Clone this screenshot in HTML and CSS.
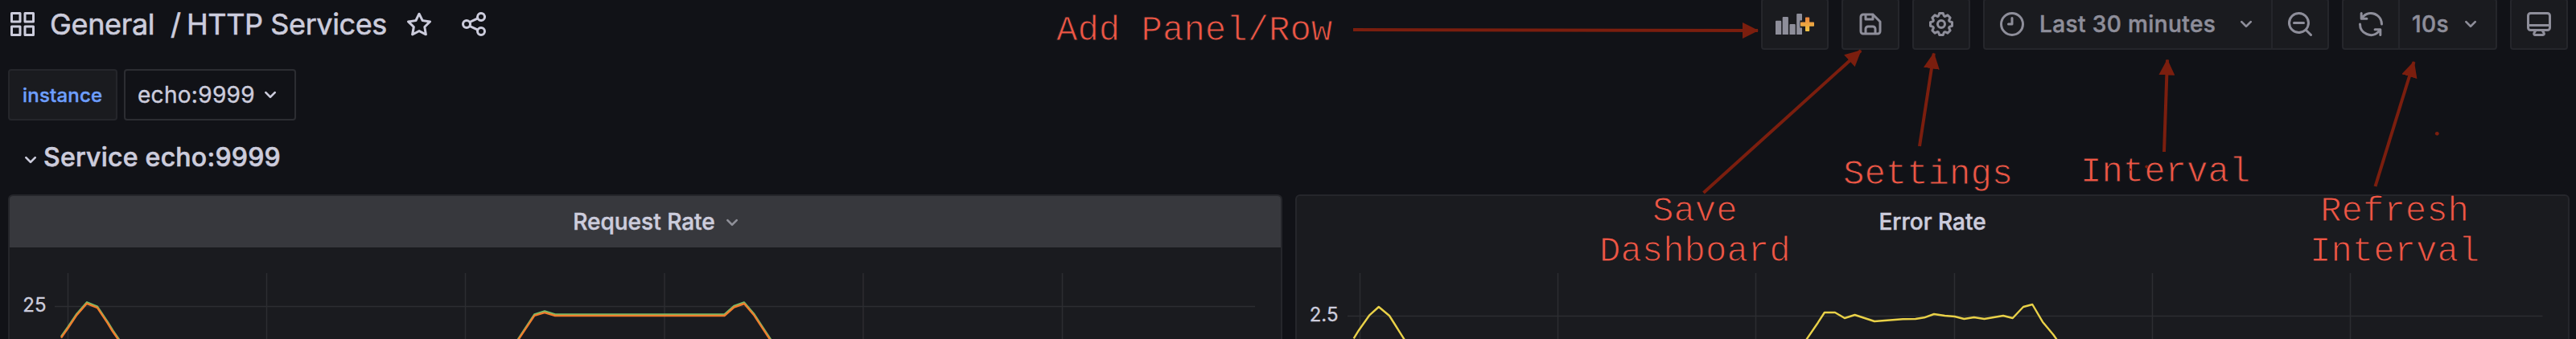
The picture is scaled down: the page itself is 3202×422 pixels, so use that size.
FILE: index.html
```html
<!DOCTYPE html>
<html lang="en">
<head>
<meta charset="utf-8">
<title>HTTP Services</title>
<link rel="stylesheet" href="styles.css">
</head>
<body>
<svg class="defs" aria-hidden="true">
  <symbol id="angle" viewBox="0 0 24 24"><path d="M17,9.17a1,1,0,0,0-1.41,0L12,12.71,8.46,9.17a1,1,0,0,0-1.41,0,1,1,0,0,0,0,1.42l4.24,4.24a1,1,0,0,0,1.42,0L17,10.59A1,1,0,0,0,17,9.17Z"/></symbol>
</svg>
<div class="page">
  <header class="toolbar">
    <svg class="icon" viewBox="0 0 24 24"><path d="M10,13H3a1,1,0,0,0-1,1v7a1,1,0,0,0,1,1h7a1,1,0,0,0,1-1V14A1,1,0,0,0,10,13ZM9,20H4V15H9ZM21,2H14a1,1,0,0,0-1,1v7a1,1,0,0,0,1,1h7a1,1,0,0,0,1-1V3A1,1,0,0,0,21,2ZM20,9H15V4h5Zm1,4H14a1,1,0,0,0-1,1v7a1,1,0,0,0,1,1h7a1,1,0,0,0,1-1V14A1,1,0,0,0,21,13Zm-1,7H15V15h5ZM10,2H3A1,1,0,0,0,2,3v7a1,1,0,0,0,1,1h7a1,1,0,0,0,1-1V3A1,1,0,0,0,10,2ZM9,9H4V4H9Z"/></svg>
    <h1 class="crumbs"><span class="folder">General</span><span class="slash">/</span><span class="name">HTTP Services</span></h1>
    <svg class="icon star" viewBox="0 0 24 24"><path d="M22,9.67A1,1,0,0,0,21.14,9l-5.69-.83L12.9,3a1,1,0,0,0-1.8,0L8.55,8.16,2.86,9a1,1,0,0,0-.81.68,1,1,0,0,0,.25,1l4.13,4-1,5.68A1,1,0,0,0,6.9,21.44L12,18.77l5.1,2.67a.93.93,0,0,0,.46.12,1,1,0,0,0,.59-.19,1,1,0,0,0,.4-1l-1-5.68,4.13-4A1,1,0,0,0,22,9.67Zm-6.15,4a1,1,0,0,0-.29.88l.72,4.2-3.76-2a1.06,1.06,0,0,0-.94,0l-3.76,2,.72-4.2a1,1,0,0,0-.29-.88l-3-3,4.21-.61a1,1,0,0,0,.76-.55L12,5.7l1.88,3.82a1,1,0,0,0,.76.55l4.21.61Z"/></svg>
    <svg class="icon" viewBox="0 0 24 24"><path d="M18,14a4,4,0,0,0-3.08,1.48l-5.1-2.35a3.64,3.64,0,0,0,0-2.26l5.1-2.35A4,4,0,1,0,14,6a4.17,4.17,0,0,0,.07.71L8.79,9.14a4,4,0,1,0,0,5.72l5.28,2.43A4.17,4.17,0,0,0,14,18a4,4,0,1,0,4-4ZM18,4a2,2,0,1,1-2,2A2,2,0,0,1,18,4ZM6,14a2,2,0,1,1,2-2A2,2,0,0,1,6,14Zm12,6a2,2,0,1,1,2-2A2,2,0,0,1,18,20Z"/></svg>
    <nav class="actions">
      <div class="btn add"><svg class="addicon" viewBox="0 0 48 26">
        <defs><linearGradient id="plus" x1="0" y1="0" x2="0" y2="1"><stop offset="0" stop-color="#e8833e"/><stop offset="1" stop-color="#f0c544"/></linearGradient></defs>
        <path d="M0 9.8q0-1 1-1h5.200q1 0 1 1V26H0ZM8.700 4.900q0-1 1-1h5.200q1 0 1 1V26H8.700ZM17.500 14q0-1 1-1h5.200q1 0 1 1v12h-7.200ZM26.200 1q0-1 1-1h4.800q1 0 1 1v7.500h-2.600v9H33V26h-6.800Z"/>
        <path fill="url(#plus)" d="M37.800 4.400h3.600q.8 0 .8.800v5.300h5q.9 0 .9.900v3.400q0 .9-.9.900h-5v5.300q0 1-.8 1h-3.600q-.8 0-.8-1v-5.300h-5.100q-.9 0-.9-.9v-3.400q0-.9.900-.9H37V5.200q0-.8.800-.8Z"/></svg></div>
      <div class="btn square"><svg class="icon" viewBox="0 0 24 24"><path d="M20.710,9.290l-6-6a1,1,0,0,0-.32-.21A1.090,1.090,0,0,0,14,3H6A3,3,0,0,0,3,6V18a3,3,0,0,0,3,3H18a3,3,0,0,0,3-3V10A1,1,0,0,0,20.710,9.290ZM9,5h4V7H9Zm6,14H9V16a1,1,0,0,1,1-1h4a1,1,0,0,1,1,1Zm4-1a1,1,0,0,1-1,1H17V16a3,3,0,0,0-3-3H10a3,3,0,0,0-3,3v3H6a1,1,0,0,1-1-1V6A1,1,0,0,1,6,5H7V8A1,1,0,0,0,8,9h6a1,1,0,0,0,1-1V6.410l4,4Z"/></svg></div>
      <div class="btn square"><svg class="icon" viewBox="0 0 24 24"><path d="M21.32,9.55l-1.89-.63.89-1.78A1,1,0,0,0,20.13,6L18,3.87a1,1,0,0,0-1.15-.19l-1.78.89-.63-1.89A1,1,0,0,0,13.5,2h-3a1,1,0,0,0-.95.68L8.92,4.57,7.14,3.68A1,1,0,0,0,6,3.87L3.87,6a1,1,0,0,0-.19,1.15l.89,1.78-1.89.63A1,1,0,0,0,2,10.5v3a1,1,0,0,0,.68.95l1.89.63-.89,1.78A1,1,0,0,0,3.87,18L6,20.13a1,1,0,0,0,1.15.19l1.78-.89.63,1.89a1,1,0,0,0,.95.68h3a1,1,0,0,0,.95-.68l.63-1.89,1.78.89A1,1,0,0,0,18,20.13L20.13,18a1,1,0,0,0,.19-1.15l-.89-1.78,1.89-.63A1,1,0,0,0,22,13.5v-3A1,1,0,0,0,21.32,9.55ZM20,12.78l-1.2.4A2,2,0,0,0,17.64,16l.57,1.14-1.1,1.1L16,17.64a2,2,0,0,0-2.79,1.16l-.4,1.2H11.22l-.4-1.2A2,2,0,0,0,8,17.64l-1.14.57-1.1-1.1L6.36,16A2,2,0,0,0,5.2,13.18L4,12.78V11.22l1.2-.4A2,2,0,0,0,6.36,8L5.79,6.89l1.1-1.1L8,6.36A2,2,0,0,0,10.82,5.2l.4-1.2h1.56l.4,1.2A2,2,0,0,0,16,6.36l1.14-.57,1.1,1.1L17.64,8a2,2,0,0,0,1.16,2.79l1.2.4ZM12,8a4,4,0,1,0,4,4A4,4,0,0,0,12,8Zm0,6a2,2,0,1,1,2-2A2,2,0,0,1,12,14Z"/></svg></div>
      <div class="group">
        <div class="btn range">
          <svg class="icon" viewBox="0 0 24 24"><path d="M12,2A10,10,0,1,0,22,12,10,10,0,0,0,12,2Zm0,18a8,8,0,1,1,8-8A8,8,0,0,1,12,20ZM12,6a1,1,0,0,0-1,1v4H9a1,1,0,0,0,0,2h3a1,1,0,0,0,1-1V7A1,1,0,0,0,12,6Z"/></svg>
          <span class="rangetext">Last 30 minutes</span>
          <svg class="angle"><use href="#angle"/></svg>
        </div>
        <div class="btn square zoomout"><svg class="icon" viewBox="0 0 24 24"><path d="M21.71,20.29,18,16.61A9,9,0,1,0,16.61,18l3.68,3.68a1,1,0,0,0,1.42,0A1,1,0,0,0,21.71,20.29ZM11,18a7,7,0,1,1,7-7A7,7,0,0,1,11,18ZM15,10H7a1,1,0,0,0,0,2h8a1,1,0,0,0,0-2Z"/></svg></div>
      </div>
      <div class="group">
        <div class="btn refresh"><svg class="icon" viewBox="0 0 24 24"><path d="M19.91,15.51H15.38a1,1,0,0,0,0,2h2.4A8,8,0,0,1,4,12a1,1,0,0,0-2,0,10,10,0,0,0,16.88,7.23V21a1,1,0,0,0,2,0V16.5A1,1,0,0,0,19.91,15.51ZM12,2A10,10,0,0,0,5.12,4.77V3a1,1,0,0,0-2,0V7.5a1,1,0,0,0,1,1h4.5a1,1,0,0,0,0-2H6.22A8,8,0,0,1,20,12a1,1,0,0,0,2,0A10,10,0,0,0,12,2Z"/></svg></div>
        <div class="btn every"><span>10s</span><svg class="angle"><use href="#angle"/></svg></div>
      </div>
      <div class="btn square"><svg class="icon" viewBox="0 0 24 24"><path d="M19,2H5A3,3,0,0,0,2,5V15a3,3,0,0,0,3,3H7.64l-.58,1a2,2,0,0,0,0,2,2,2,0,0,0,1.75,1h6.46A2,2,0,0,0,17,21a2,2,0,0,0,0-2l-.59-1H19a3,3,0,0,0,3-3V5A3,3,0,0,0,19,2ZM8.77,20,10,18H14l1.2,2ZM20,15a1,1,0,0,1-1,1H5a1,1,0,0,1-1-1V14H20Zm0-3H4V5A1,1,0,0,1,5,4H19a1,1,0,0,1,1,1Z"/></svg></div>
    </nav>
  </header>

  <div class="variables">
    <label class="varname">instance</label>
    <div class="varvalue"><span>echo:9999</span><svg class="angle"><use href="#angle"/></svg></div>
  </div>

  <div class="row"><svg class="angle"><use href="#angle"/></svg><h2 class="rowtitle">Service echo:9999</h2></div>

  <main class="panels">
    <section class="panel">
      <div class="head hover"><span>Request Rate</span><svg class="angle"><use href="#angle"/></svg></div>
      <svg class="chart" viewBox="12 308 1580 114">
        <path class="grid" d="M84.500 340V422M331.500 340V422M578.500 340V422M826 340V422M1073 340V422M1320.500 340V422M68 381.500H1560"/>
        <text class="tick" x="57.500" y="388" text-anchor="end">25</text>
        <g class="line">
          <path stroke="#73bf69" d="M76 419 84.500 407 95.400 390.700 108 376.300 121 381.700 133.700 400.700 140 411 149 424M643.500 423 664.300 391.300 677 387.500 690 391.500H900.500L912.400 381 925 376.500 937.600 391.300 948.200 407.700 959 424"/>
          <path stroke="#ef7d2e" d="M76 420.500 84.500 408.500 95.400 392.200 108 377.800 121 383.200 133.700 402.200 140 412.500 148 424M643.500 424 664.300 392.800 677 389.200 690 393H900.500L912.400 382.500 925 378 937.600 392.800 948.200 409.200 958 424"/>
        </g>
      </svg>
    </section>
    <section class="panel">
      <div class="head"><span>Error Rate</span></div>
      <svg class="chart" viewBox="1612 308 1580 114">
        <path class="grid" d="M1690.500 340V422M1936.500 340V422M2182.500 340V422M2429.500 340V422M2675.500 340V422M2921.500 340V422M1675 393.500H3160.500"/>
        <text class="tick" x="1663.500" y="400" text-anchor="end">2.5</text>
        <path class="line" stroke="#e9d148" d="M1682.700 421.300 1689.300 410.700 1702 392.700 1713.800 382 1727 393 1735.200 406 1739.800 413.300 1746.500 424M2244.500 424 2259.700 401.700 2267.900 389H2281L2292.900 396 2305.600 392 2330 400 2365.300 397.300 2381 397 2391.800 395.300 2404 391 2417.400 393 2429.700 394 2441.400 397 2453.700 395 2466.500 397 2490 393 2501.800 396 2515 382 2526.300 379 2539 400.700 2552.400 416.700 2557.500 424"/>
      </svg>
    </section>
  </main>

  <svg class="arrows" viewBox="0 0 3202 422">
    <defs><marker id="head" markerUnits="userSpaceOnUse" markerWidth="20" markerHeight="20" refX="19" refY="10" orient="auto"><path d="M0 0 20 10 0 20Z"/></marker></defs>
    <g class="shaft">
      <path d="M1682 37 2185 38"/>
      <path d="M2117.500 240 2313 63"/>
      <path d="M2386 182 2403.800 66.500"/>
      <path d="M2690 189 2694 74.500"/>
      <path d="M2952.500 232 3000.500 77"/>
    </g>
    <circle cx="3029.300" cy="166.300" r="2.400"/>
  </svg>
  <div class="note add-note">Add Panel/Row</div>
  <div class="note save-note">Save<br>Dashboard</div>
  <div class="note settings-note">Settings</div>
  <div class="note interval-note">Interval</div>
  <div class="note refresh-note">Refresh<br>Interval</div>
  <svg class="arrows" viewBox="0 0 3202 422"><circle cx="2668.300" cy="207.500" r="2"/><circle cx="2647.600" cy="211" r="1.600"/></svg>
</div>
</body>
</html>
```

FILE: styles.css
```css
* { box-sizing: border-box; }
body { margin: 0; background: #111217; font-family: Inter, sans-serif; color: #ccccdc; }
svg { display: block; fill: currentColor; flex: none; }
h1, h2 { margin: 0; font-weight: 500; }
.defs { width: 0; height: 0; position: absolute; }
.page { position: relative; width: 3202px; height: 422px; overflow: hidden; }
.icon { width: 36px; height: 36px; }
.angle { width: 32px; height: 32px; }

.toolbar { display: flex; align-items: center; height: 60px; padding: 0 10px; }
.crumbs { display: flex; width: 418px; margin-left: 16px; font-size: 36px; line-height: 44px; white-space: nowrap; font-weight: 400; letter-spacing: -0.35px; -webkit-text-stroke: 0.6px; }
.crumbs span { flex: none; }
.folder { width: 150px; }
.slash { width: 20px; }
.name { letter-spacing: -0.4px; }
.star { margin-left: 23px; margin-right: 32px; }

.actions { display: flex; gap: 16px; margin-left: auto; height: 64px; align-self: flex-start; margin-top: -2px; color: #8e8e9a; font-size: 28px; font-weight: 500; letter-spacing: 0.4px; -webkit-text-stroke: 0.5px; }
.btn { display: flex; align-items: center; height: 64px; border: 2px solid #25262b; border-radius: 4px; background: #1a1b1f; white-space: nowrap; }
.square { width: 72px; justify-content: center; }
.add { width: 84px; padding-left: 16px; }
.addicon { width: 48px; height: 26px; }
.group { display: flex; }
.group .btn:first-child { border-radius: 4px 0 0 4px; border-right: 0; }
.group .btn:last-child { border-radius: 0 4px 4px 0; }
.range { width: 358px; padding-left: 16px; }
.rangetext { width: 240px; margin-left: 16px; }
.refresh { width: 70px; justify-content: center; }
.every { width: 123px; padding-left: 15px; }
.every span { width: 56px; }
.range .angle, .every .angle { margin-left: 1px; }

.variables { display: flex; gap: 8px; margin: 26px 0 0 10px; height: 64px; }
.varname, .varvalue { display: flex; align-items: center; border: 2px solid #25262b; border-radius: 4px; }
.varname { width: 136px; padding-left: 16px; background: #1a1b1f; color: #6e9fff; font-size: 24px; font-weight: 500; -webkit-text-stroke: 0.4px; letter-spacing: 0.2px; }
.varvalue { width: 214px; padding-left: 15px; border-color: #2c2d32; font-size: 28px; letter-spacing: 0.3px; -webkit-text-stroke: 0.4px; }
.varvalue span { width: 149px; }

.row { display: flex; align-items: center; height: 52px; margin-top: 20px; padding-left: 22px; }
.rowtitle { font-size: 32px; line-height: 40px; letter-spacing: 0.25px; -webkit-text-stroke: 0.6px; }
.row .angle { margin-top: 5px; }

.panels { display: flex; gap: 16px; margin: 20px 0 0 10px; }
.panel { width: 1584px; height: 200px; border: 2px solid #25262b; border-radius: 6px; background: #1a1b1f; overflow: hidden; }
.head { display: flex; align-items: center; justify-content: center; height: 64px; font-size: 28px; font-weight: 500; white-space: nowrap; -webkit-text-stroke: 0.5px; }
.hover { background: #37383d; padding-left: 30px; }
.hover .angle { margin-left: 5px; margin-right: -4px; margin-top: 2px; color: #8f9099; }
.chart { width: 1580px; height: 114px; }
.grid { fill: none; stroke: #2c2d31; stroke-width: 1.5; }
.tick { font-size: 24px; stroke: currentColor; stroke-width: 0.3px; }
.line { fill: none; stroke-width: 2.4; stroke-linejoin: round; }

.arrows { position: absolute; top: 0; left: 0; width: 3202px; height: 422px; fill: #7b1e0e; pointer-events: none; }
.shaft path { fill: none; stroke: #7b1e0e; stroke-width: 4; marker-end: url(#head); }
.note { position: absolute; font-family: "Courier New", "Liberation Mono", monospace; font-size: 44px; line-height: 50px; color: #ee5645; text-align: center; white-space: nowrap; -webkit-text-stroke: 1px #15161b; }
.add-note { left: 1313px; top: 13px; }
.save-note { left: 1988px; top: 238px; }
.settings-note { left: 2291px; top: 192px; }
.interval-note { left: 2586px; top: 189px; }
.refresh-note { left: 2871px; top: 238px; }
```
